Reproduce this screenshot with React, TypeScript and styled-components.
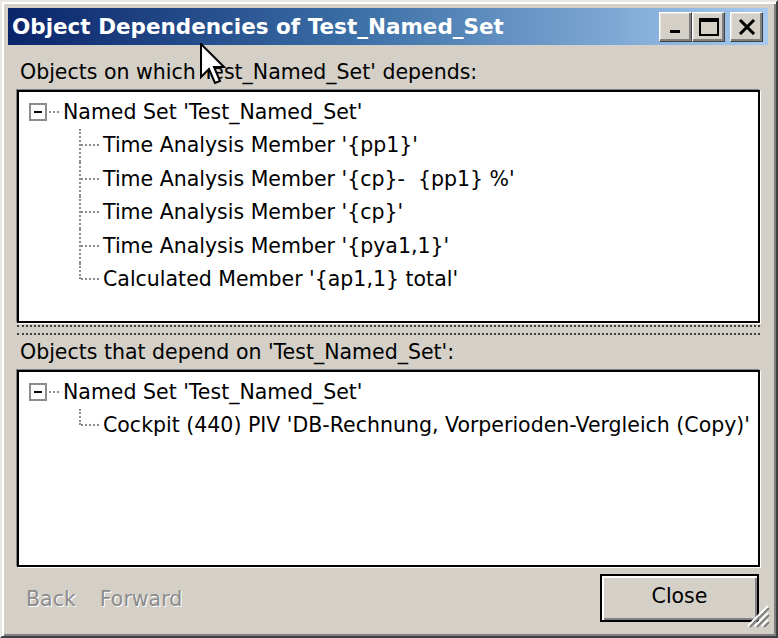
import React from 'react';
import styled, { createGlobalStyle } from 'styled-components';

const GlobalStyle = createGlobalStyle`
  html, body {
    margin: 0;
    padding: 0;
    background: #d4d0c8;
  }
  * { box-sizing: border-box; }
`;

const uiFont = `"DejaVu Sans", "Liberation Sans", sans-serif`;

interface TreeNode {
  label: string;
  children: string[];
}

const dependsOn: TreeNode = {
  label: "Named Set 'Test_Named_Set'",
  children: [
    "Time Analysis Member '{pp1}'",
    "Time Analysis Member '{cp}-  {pp1} %'",
    "Time Analysis Member '{cp}'",
    "Time Analysis Member '{pya1,1}'",
    "Calculated Member '{ap1,1} total'",
  ],
};

const dependents: TreeNode = {
  label: "Named Set 'Test_Named_Set'",
  children: ["Cockpit (440) PIV 'DB-Rechnung, Vorperioden-Vergleich (Copy)'"],
};

const Window = styled.div`
  position: relative;
  width: 778px;
  height: 638px;
  display: flex;
  flex-direction: column;
  background: #d4d0c8;
  border: 2px solid;
  border-color: #e8e6e0 #404040 #404040 #e8e6e0;
  box-shadow: inset 2px 2px #ffffff, inset -2px -2px #808080;
  padding: 6px 8px 6px 6px;
  font-family: ${uiFont};
  font-size: 20.5px;
  color: #000;
`;

const TitleBar = styled.div`
  height: 37px;
  flex: none;
  display: flex;
  align-items: center;
  padding: 0 5px 0 4px;
  background: linear-gradient(to right, #0a246a 0%, #3a6ea5 45%, #a6caf0 100%);
`;

const TitleText = styled.div`
  flex: 1;
  color: #fff;
  font-weight: bold;
  font-size: 21.5px;
  white-space: nowrap;
`;

const CaptionButton = styled.button<{ $gap?: number }>`
  width: 33px;
  height: 30px;
  margin-left: ${p => p.$gap ?? 0}px;
  padding: 0;
  display: flex;
  align-items: center;
  justify-content: center;
  background: #d4d0c8;
  border: 1px solid;
  border-color: #ffffff #404040 #404040 #ffffff;
  box-shadow: inset -2px -2px #808080, inset 1px 1px #e8e6e0;
`;

const Content = styled.div`
  flex: 1;
  display: flex;
  flex-direction: column;
  padding: 0 0 0 9px;
  margin-right: 8px;
`;

const SectionLabel = styled.div<{ $height: number }>`
  height: ${p => p.$height}px;
  flex: none;
  display: flex;
  align-items: flex-end;
  padding: 0 0 6px 3px;
  line-height: 24px;
  white-space: nowrap;
`;

const TreePanel = styled.div<{ $height?: number }>`
  ${p => (p.$height ? `height: ${p.$height}px; flex: none;` : 'flex: 1;')}
  background: #fff;
  border: 2px solid #000;
  box-shadow: -1px -1px #808080, 1px 1px #ffffff;
  padding: 3px 0 0 10px;
  overflow: hidden;
`;

const Row = styled.div<{ $indent: number }>`
  height: 33.5px;
  display: flex;
  align-items: center;
  padding-left: ${p => p.$indent}px;
  white-space: pre;
`;

const Expander = styled.div`
  width: 18px;
  height: 18px;
  flex: none;
  border: 2px solid #8c8c8c;
  background: #fff;
  display: flex;
  align-items: center;
  justify-content: center;
  &::after {
    content: '';
    width: 8px;
    height: 2px;
    background: #000;
  }
`;

const HDots = styled.div<{ $width: number }>`
  width: ${p => p.$width}px;
  flex: none;
  border-top: 2px dotted #8c8c8c;
  margin: 0 4px 0 2px;
`;

const Connector = styled.div<{ $last: boolean }>`
  position: relative;
  width: 20px;
  height: 100%;
  flex: none;
  margin-right: 4px;
  &::before {
    content: '';
    position: absolute;
    left: 0;
    top: 0;
    height: ${p => (p.$last ? '50%' : '100%')};
    border-left: 2px dotted #8c8c8c;
  }
  &::after {
    content: '';
    position: absolute;
    left: 2px;
    right: 0;
    top: calc(50% - 1px);
    border-top: 2px dotted #8c8c8c;
  }
`;

const Splitter = styled.div`
  height: 14px;
  flex: none;
  padding-top: 2px;
  &::before, &::after {
    content: '';
    display: block;
    border-top: 2px dotted #404040;
  }
  &::after {
    margin-top: 6px;
  }
`;

const Footer = styled.div`
  height: 63px;
  flex: none;
  display: flex;
  align-items: flex-start;
  padding-top: 7px;
`;

const NavLinks = styled.div`
  flex: 1;
  display: flex;
  gap: 24px;
  padding: 13px 0 0 9px;
`;

const DisabledLink = styled.span`
  color: #8c8c8c;
  text-shadow: 1px 1px 0 #ffffff;
`;

const DefaultButton = styled.button`
  width: 159px;
  height: 48px;
  font-family: ${uiFont};
  font-size: 20.5px;
  color: #000;
  background: #d4d0c8;
  border: 2px solid #000;
  box-shadow: inset 2px 2px #ffffff, inset -2px -2px #808080;
  padding: 0 0 4px;
  margin-right: 1px;
`;

const Grip = styled.svg`
  position: absolute;
  right: 6px;
  bottom: 8px;
`;

const Cursor = styled.svg`
  position: absolute;
  left: 198px;
  top: 41px;
`;

function Tree({ node }: { node: TreeNode }) {
  return (
    <>
      <Row $indent={0}>
        <Expander />
        <HDots $width={10} />
        <span>{node.label}</span>
      </Row>
      {node.children.map((child, i) => (
        <Row key={i} $indent={50}>
          <Connector $last={i === node.children.length - 1} />
          <span>{child}</span>
        </Row>
      ))}
    </>
  );
}

export default function App() {
  return (
    <>
      <GlobalStyle />
      <Window>
        <TitleBar>
          <TitleText>Object Dependencies of Test_Named_Set</TitleText>
          <CaptionButton>
            <svg width="14" height="14" viewBox="0 0 14 14">
              <rect x="1" y="10" width="10" height="3" fill="#000" />
            </svg>
          </CaptionButton>
          <CaptionButton>
            <svg width="20" height="18" viewBox="0 0 20 18">
              <rect x="1" y="1" width="18" height="16" fill="none" stroke="#000" strokeWidth="2" />
              <rect x="1" y="1" width="18" height="3" fill="#000" />
            </svg>
          </CaptionButton>
          <CaptionButton $gap={5}>
            <svg width="18" height="16" viewBox="0 0 18 16">
              <path d="M2 1 L16 15 M16 1 L2 15" stroke="#000" strokeWidth="3" />
            </svg>
          </CaptionButton>
        </TitleBar>
        <Content>
          <SectionLabel $height={45}>Objects on which Test_Named_Set' depends:</SectionLabel>
          <TreePanel $height={233}>
            <Tree node={dependsOn} />
          </TreePanel>
          <Splitter />
          <SectionLabel $height={33}>Objects that depend on 'Test_Named_Set':</SectionLabel>
          <TreePanel>
            <Tree node={dependents} />
          </TreePanel>
          <Footer>
            <NavLinks>
              <DisabledLink>Back</DisabledLink>
              <DisabledLink>Forward</DisabledLink>
            </NavLinks>
            <DefaultButton>Close</DefaultButton>
          </Footer>
        </Content>
        <Grip width="26" height="26" viewBox="0 0 26 26">
          <path d="M24 4 L4 24 M24 11 L11 24 M24 18 L18 24" stroke="#ffffff" strokeWidth="2" />
          <path d="M25 6 L6 25 M25 13 L13 25 M25 20 L20 25" stroke="#808080" strokeWidth="2" />
        </Grip>
        <Cursor width="26" height="44" viewBox="0 0 13 22">
          <path d="M0.5 0.5 L0.5 17 L4.5 13 L7.5 20 L10 19 L7 12 L12 12 Z" fill="#fff" stroke="#000" strokeWidth="1" strokeLinejoin="miter" />
        </Cursor>
      </Window>
    </>
  );
}
